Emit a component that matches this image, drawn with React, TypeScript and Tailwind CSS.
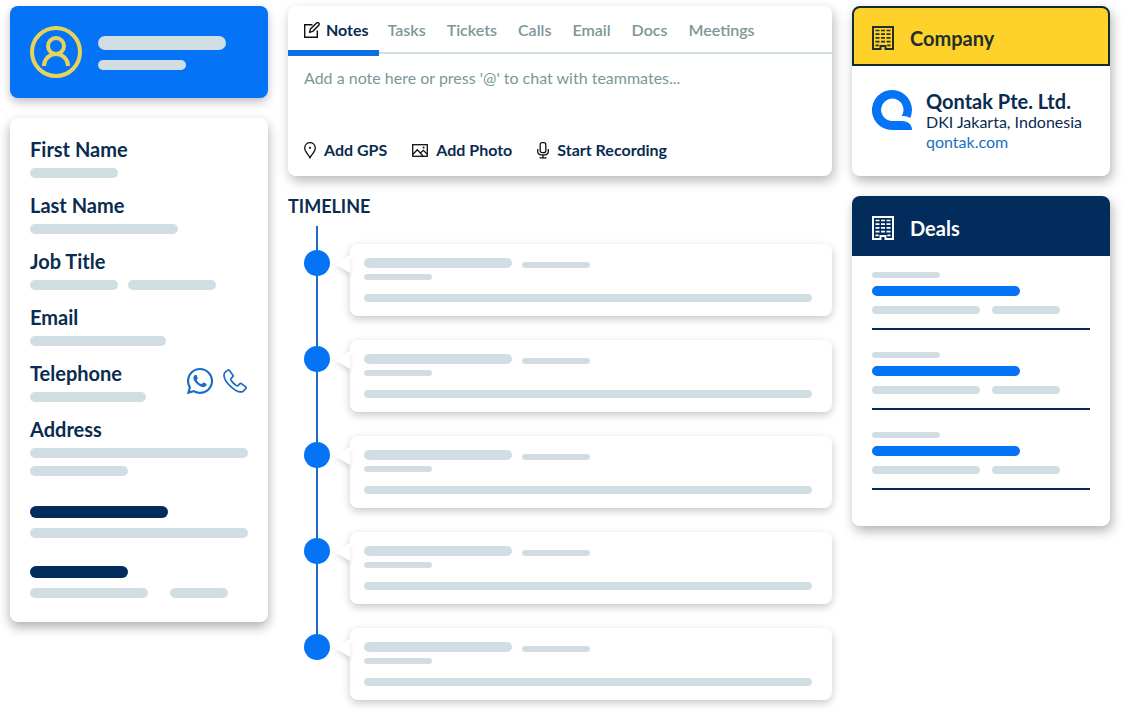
import React from 'react';
import { FaWhatsapp } from 'react-icons/fa';

interface BarProps {
  className: string;
}

interface Field {
  label: string;
  bars: string[];
}

const TABS = ['Tasks', 'Tickets', 'Calls', 'Email', 'Docs', 'Meetings'];

const FIELDS: Field[] = [
  { label: 'First Name', bars: ['w-[88px]'] },
  { label: 'Last Name', bars: ['w-[148px]'] },
  { label: 'Job Title', bars: ['w-[88px]', 'w-[88px]'] },
  { label: 'Email', bars: ['w-[136px]'] },
];

const Bar: React.FC<BarProps> = ({ className }) => <div className={`rounded-full ${className}`} />;

const UserIcon = () => (
  <svg width="52" height="52" viewBox="0 0 52 52" fill="none" stroke="#e6d35c" strokeWidth="4">
    <circle cx="26" cy="26" r="24" />
    <circle cx="26" cy="20" r="8" />
    <path d="M14 40a12 12 0 0 1 24 0" />
  </svg>
);

const NoteIcon = () => (
  <svg width="16" height="16" viewBox="0 0 16 16" fill="none" stroke="#111" strokeWidth="1.4">
    <path d="M8.500 2.700H.7v12.600h12.600V8.500" />
    <path d="M5.600 10.400l.8-3.300 6.200-6a1.400 1.400 0 0 1 2.200 2.100L8.700 9.400z" strokeLinejoin="round" />
  </svg>
);

const PinIcon = () => (
  <svg width="12" height="17" viewBox="0 0 12 17" fill="none" stroke="#111" strokeWidth="1.300">
    <path d="M6 16C4.500 12.600.7 9.500.7 5.900a5.300 5.300 0 0 1 10.600 0C11.300 9.500 7.500 12.600 6 16z" strokeLinejoin="round" />
    <circle cx="6" cy="5.800" r="1.100" fill="#111" stroke="none" />
  </svg>
);

const PhotoIcon = () => (
  <svg width="16" height="13" viewBox="0 0 16 13" fill="none" stroke="#111" strokeWidth="1.300">
    <rect x=".7" y=".7" width="14.600" height="11.600" />
    <path d="M.8 10.500l4.500-4.800 5.800 6.300M8.500 9l2.800-2.700 4 4" />
    <circle cx="11.600" cy="3.600" r="1" fill="#111" stroke="none" />
  </svg>
);

const MicIcon = () => (
  <svg width="12" height="17" viewBox="0 0 12 17" fill="none" stroke="#111" strokeWidth="1.300">
    <rect x="3.200" y=".7" width="5.600" height="10" rx="2" />
    <path d="M.7 7v2.200A3.500 3.500 0 0 0 4 12.900h4a3.500 3.500 0 0 0 3.300-3.700V7M6 13v3M2.500 15.900h7" />
  </svg>
);

const BuildingIcon = () => (
  <svg width="22" height="24" viewBox="0 0 22 24" fill="none" stroke="currentColor" strokeWidth="2">
    <path d="M1 1h20v22h-7.500v-3h-5v3H1z" />
    <path d="M3.500 4.500h15M3.500 8.200h15M3.500 11.900h15M3.500 15.600h15" strokeWidth="1.700" strokeDasharray="4 1.500" />
    <path d="M3.500 19.300h3.200M15.300 19.300h3.200" strokeWidth="1.700" />
  </svg>
);

const PhoneIcon = () => (
  <svg width="24" height="24" viewBox="0 0 24 24" fill="none" stroke="#1a6cc4" strokeWidth="1.700" strokeLinejoin="round">
    <path d="M4.900 1.100 1.700 3.700C-.2 7.200 3 12.800 7.300 17.100c4.300 4.200 9.300 7 12.800 5.300l2.900-3.200c.3-.5.200-.9-.2-1.300l-4.400-3.300c-.5-.3-1-.3-1.400.1l-1.900 2c-.6.500-1.300.2-2-.3-2-1.400-3.800-3.200-5.100-5.200-.4-.7-.5-1.200 0-1.700l1.800-1.800c.4-.4.4-.9.1-1.400L6.300 1.300c-.4-.5-.9-.5-1.400-.2z" />
  </svg>
);

const QontakLogo = () => (
  <svg width="40" height="40" viewBox="0 0 40 40" className="shrink-0">
    <path
      d="M38.300 28A20 20 0 1 0 20 40H40C40 34.500 36 31 30 31H20.500A11.200 11.200 0 1 1 29.500 26.200C32.500 25.500 35.500 26.300 38.300 28z"
      fill="#0473f5"
    />
  </svg>
);

const TimelineItem = () => (
  <li className="flex">
    <div className="mt-[6px] ml-4 size-[26px] shrink-0 rounded-full bg-[#0473f5]" />
    <article className="relative ml-5 flex h-[72px] flex-1 flex-col rounded-lg bg-white px-[14px] pt-[14px] shadow-[0_3px_8px_rgba(0,0,0,0.22)]">
      <svg
        width="14"
        height="18"
        viewBox="0 0 14 18"
        className="absolute top-[11px] -left-[14px] drop-shadow-[0_3px_2px_rgba(0,0,0,0.12)]"
      >
        <path d="M14 0v18L1 10.500Q0 9 1 8z" fill="#fff" />
      </svg>
      <div className="flex items-end gap-[10px]">
        <Bar className="h-[10px] w-[148px] bg-[#d0dee3]" />
        <Bar className="h-[6px] w-[68px] bg-[#d0dee3]" />
      </div>
      <Bar className="mt-[6px] h-[6px] w-[68px] bg-[#d0dee3]" />
      <Bar className="mt-[14px] mr-[6px] h-2 bg-[#d0dee3]" />
    </article>
  </li>
);

const Deal = () => (
  <li className="border-b-2 border-[#042c54] pb-[14px]">
    <Bar className="h-[6px] w-[68px] bg-[#d0dee3]" />
    <Bar className="mt-2 h-[10px] w-[148px] bg-[#0473f5]" />
    <div className="mt-[10px] flex gap-3">
      <Bar className="h-2 w-[108px] bg-[#d0dee3]" />
      <Bar className="h-2 w-[68px] bg-[#d0dee3]" />
    </div>
  </li>
);

const ContactPanel = () => (
  <aside className="flex w-[258px] shrink-0 flex-col gap-5">
    <div className="flex h-[92px] items-center gap-4 rounded-lg bg-[#0473f5] px-5 shadow-[0_4px_10px_rgba(0,0,0,0.25)]">
      <UserIcon />
      <div className="flex flex-col gap-[10px] pt-[2px]">
        <Bar className="h-[14px] w-[128px] bg-[#d0dee3]" />
        <Bar className="h-[10px] w-[88px] bg-[#d0dee3]" />
      </div>
    </div>

    <div className="rounded-lg bg-white px-5 pt-5 pb-6 shadow-[0_5px_12px_rgba(0,0,0,0.32)]">
      <div className="flex flex-col gap-4">
        {FIELDS.map((field) => (
          <div key={field.label}>
            <h3 className="text-xl leading-[22px] font-bold">{field.label}</h3>
            <div className="mt-2 flex gap-[10px]">
              {field.bars.map((width, i) => (
                <Bar key={i} className={`h-[10px] bg-[#d0dee3] ${width}`} />
              ))}
            </div>
          </div>
        ))}

        <div className="flex items-end justify-between">
          <div>
            <h3 className="text-xl leading-[22px] font-bold">Telephone</h3>
            <Bar className="mt-2 h-[10px] w-[116px] bg-[#d0dee3]" />
          </div>
          <div className="flex items-center gap-2 pr-px pb-[6px]">
            <button aria-label="WhatsApp" className="text-[#1a6cc4]">
              <FaWhatsapp size={30} />
            </button>
            <button aria-label="Call">
              <PhoneIcon />
            </button>
          </div>
        </div>

        <div>
          <h3 className="text-xl leading-[22px] font-bold">Address</h3>
          <Bar className="mt-2 h-[10px] bg-[#d0dee3]" />
          <Bar className="mt-2 h-[10px] w-[98px] bg-[#d0dee3]" />
        </div>
      </div>

      <Bar className="mt-[30px] h-3 w-[138px] bg-[#022c5c]" />
      <Bar className="mt-[10px] h-[10px] bg-[#d0dee3]" />
      <Bar className="mt-7 h-3 w-[98px] bg-[#022c5c]" />
      <div className="mt-[10px] flex gap-[22px]">
        <Bar className="h-[10px] w-[118px] bg-[#d0dee3]" />
        <Bar className="h-[10px] w-[58px] bg-[#d0dee3]" />
      </div>
    </div>
  </aside>
);

const Composer = () => (
  <section className="rounded-lg bg-white pb-[14px] shadow-[2px_5px_12px_rgba(0,0,0,0.28)]">
    <nav className="flex h-12 gap-[21px] border-b-2 border-[#cfdfe3] text-base">
      <button className="-mr-3 flex h-[50px] shrink-0 items-center gap-[6px] border-b-[6px] border-[#0b6fe4] pt-1 pr-[10px] pl-4 font-bold">
        <NoteIcon />
        Notes
      </button>
      {TABS.map((tab) => (
        <button key={tab} className="pt-[2px] font-semibold text-[#7b9799]">
          {tab}
        </button>
      ))}
    </nav>
    <textarea
      aria-label="Note"
      placeholder="Add a note here or press '@' to chat with teammates..."
      className="block h-[84px] w-full resize-none px-4 pt-3 text-base leading-6 outline-none placeholder:text-[#7b9799]"
    />
    <div className="flex h-6 items-center gap-[25px] px-4 text-base leading-6 font-bold">
      <button className="flex items-center gap-2">
        <PinIcon />
        Add GPS
      </button>
      <button className="flex items-center gap-2">
        <PhotoIcon />
        Add Photo
      </button>
      <button className="flex items-center gap-2">
        <MicIcon />
        Start Recording
      </button>
    </div>
  </section>
);

const Timeline = () => (
  <section className="mt-[18px]">
    <h2 className="text-lg leading-6 font-bold">TIMELINE</h2>
    <div className="relative mt-2 pt-[18px]">
      <div className="absolute top-0 bottom-14 left-7 w-[2px] bg-[#1a6cc8]" />
      <ul className="relative flex flex-col gap-6">
        {[1, 2, 3, 4, 5].map((n) => (
          <TimelineItem key={n} />
        ))}
      </ul>
    </div>
  </section>
);

const AccountPanel = () => (
  <aside className="flex w-[258px] shrink-0 flex-col gap-5">
    <section className="rounded-lg bg-white shadow-[2px_5px_12px_rgba(0,0,0,0.3)]">
      <header className="flex h-[60px] items-center gap-4 rounded-t-lg border-2 border-[#102c30] bg-[#fed12b] px-[18px] pt-1 text-[#22302a]">
        <BuildingIcon />
        <h2 className="text-xl leading-[22px] font-bold">Company</h2>
      </header>
      <div className="flex h-[110px] gap-[14px] px-5 pt-6">
        <QontakLogo />
        <div className="text-base leading-5">
          <h3 className="text-xl leading-[22px] font-bold whitespace-nowrap">Qontak Pte. Ltd.</h3>
          <p className="whitespace-nowrap">DKI Jakarta, Indonesia</p>
          <a href="#" className="text-[#1a6fc4]">
            qontak.com
          </a>
        </div>
      </div>
    </section>

    <section className="rounded-lg bg-white shadow-[2px_5px_12px_rgba(0,0,0,0.3)]">
      <header className="flex h-[60px] items-center gap-4 rounded-t-lg bg-[#022c5c] px-5 pt-1 text-white">
        <BuildingIcon />
        <h2 className="text-xl leading-[22px] font-bold">Deals</h2>
      </header>
      <ul className="flex flex-col gap-[22px] px-5 pt-4 pb-9">
        {[1, 2, 3].map((n) => (
          <Deal key={n} />
        ))}
      </ul>
    </section>
  </aside>
);

const App: React.FC = () => {
  return (
    <div className="flex min-h-screen items-start gap-5 bg-white pt-[6px] pr-[14px] pb-3 pl-[10px] font-['Lato',sans-serif] text-[#0a2c50]">
      <ContactPanel />
      <main className="min-w-0 flex-1">
        <Composer />
        <Timeline />
      </main>
      <AccountPanel />
    </div>
  );
};

export default App;
